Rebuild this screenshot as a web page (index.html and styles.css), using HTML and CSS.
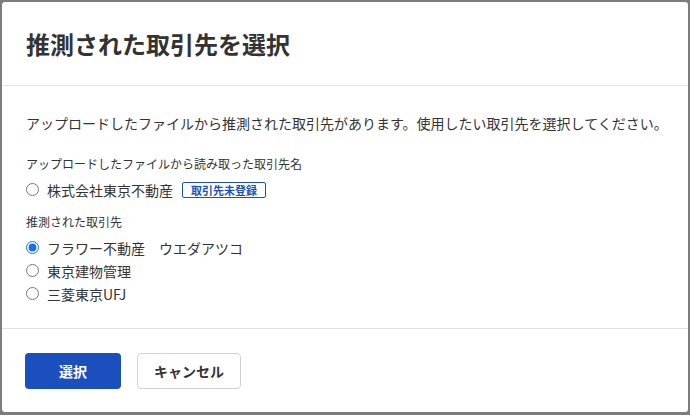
FILE: index.html
```html
<!DOCTYPE html>
<html lang="ja">
<head>
    <meta charset="UTF-8">
    <meta name="viewport" content="width=device-width, initial-scale=1.0">
    <title>推測された取引先を選択</title>
    <link rel="stylesheet" href="styles.css">
</head>
<body>

    <div class="dialog">
        <!-- Header -->
        <div class="dialog-header">
            <h1>推測された取引先を選択</h1>
        </div>

        <!-- Body -->
        <div class="dialog-body">
            <p class="lead">アップロードしたファイルから推測された取引先があります。使用したい取引先を選択してください。</p>

            <p class="group-label">アップロードしたファイルから読み取った取引先名</p>
            <label class="radio-row">
                <input type="radio" name="partner" value="original">
                <span>株式会社東京不動産</span>
                <span class="badge">取引先未登録</span>
            </label>

            <p class="group-label second">推測された取引先</p>
            <label class="radio-row">
                <input type="radio" name="partner" value="flower" checked>
                <span>フラワー不動産　ウエダアツコ</span>
            </label>
            <label class="radio-row">
                <input type="radio" name="partner" value="tokyo">
                <span>東京建物管理</span>
            </label>
            <label class="radio-row">
                <input type="radio" name="partner" value="mufj">
                <span>三菱東京UFJ</span>
            </label>
        </div>

        <!-- Footer -->
        <div class="dialog-footer">
            <button class="btn btn-primary">選択</button>
            <button class="btn btn-secondary">キャンセル</button>
        </div>
    </div>

</body>
</html>
```

FILE: styles.css
```css
body {
    margin: 0;
    background: #7d7d7d;
    font-family: "Noto Sans CJK JP", "Noto Sans", sans-serif;
    color: #333;
}

.dialog {
    margin: 2px 2px 3px 2px;
    height: 410px;
    background: #fff;
    border-radius: 3px;
    display: flex;
    flex-direction: column;
    overflow: hidden;
}

.dialog-header {
    flex-shrink: 0;
    height: 83px;
    padding: 0 24px;
    display: flex;
    align-items: center;
    border-bottom: 1px solid #e2e2e2;
}

.dialog-header h1 {
    margin: 0;
    font-size: 24px;
    font-weight: bold;
    line-height: 32px;
    color: #333;
}

.dialog-body {
    flex-shrink: 0;
    padding: 27px 24px 23px;
    border-bottom: 1px solid #e2e2e2;
}

.lead {
    margin: 0 0 22px;
    font-size: 14px;
    line-height: 20px;
    white-space: nowrap;
}

.group-label {
    margin: 0 0 5px;
    font-size: 12px;
    line-height: 18px;
}

.group-label.second {
    margin-top: 12px;
}

.radio-row {
    display: flex;
    align-items: center;
    height: 23px;
    font-size: 14px;
}

.radio-row input {
    margin: 0 8px 0 0;
    width: 13px;
    height: 13px;
    accent-color: #1a6ef0;
}

.badge {
    margin-left: 9px;
    padding: 0 8px;
    border: 1px solid #1a4fbd;
    border-radius: 2px;
    color: #1a4fbd;
    font-size: 11px;
    font-weight: bold;
    line-height: 14px;
}

.dialog-footer {
    flex: 1;
    padding: 24px 23px;
    display: flex;
    align-items: flex-start;
    gap: 16px;
}

.btn {
    height: 36px;
    border-radius: 4px;
    font-family: inherit;
    font-size: 14px;
    font-weight: bold;
    cursor: pointer;
}

.btn-primary {
    width: 96px;
    background: #1a4fbd;
    border: none;
    color: #fff;
}

.btn-secondary {
    width: 104px;
    background: #fff;
    border: 1px solid #d2d2d2;
    color: #333;
}
```
